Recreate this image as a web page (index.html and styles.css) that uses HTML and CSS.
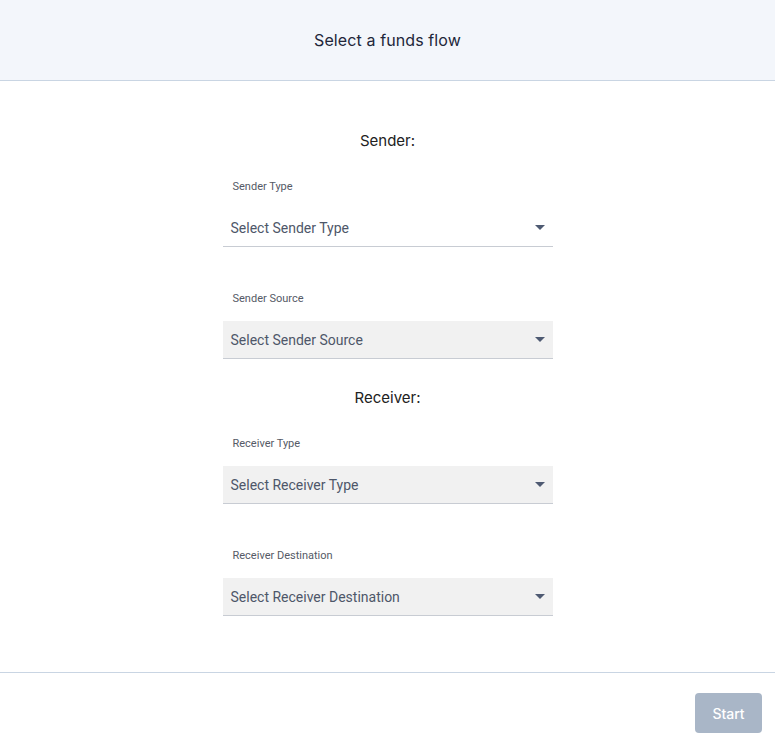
FILE: index.html
```html
<!DOCTYPE html>
<html>
<head>
<meta charset="utf-8">
<link rel="stylesheet" href="styles.css">
</head>
<body>
<header class="top">
  <h1 class="top-title">Select a funds flow</h1>
</header>
<main class="content">
  <section class="group">
    <h2 class="group-title">Sender:</h2>
    <div class="field">
      <label class="field-label">Sender Type</label>
      <div class="select select-plain"><span>Select Sender Type</span><svg class="caret" width="10" height="5" viewBox="0 0 10 5"><path d="M0 0h10L5 5z"/></svg></div>
    </div>
    <div class="field">
      <label class="field-label">Sender Source</label>
      <div class="select"><span>Select Sender Source</span><svg class="caret" width="10" height="5" viewBox="0 0 10 5"><path d="M0 0h10L5 5z"/></svg></div>
    </div>
  </section>
  <section class="group">
    <h2 class="group-title">Receiver:</h2>
    <div class="field">
      <label class="field-label">Receiver Type</label>
      <div class="select"><span>Select Receiver Type</span><svg class="caret" width="10" height="5" viewBox="0 0 10 5"><path d="M0 0h10L5 5z"/></svg></div>
    </div>
    <div class="field">
      <label class="field-label">Receiver Destination</label>
      <div class="select"><span>Select Receiver Destination</span><svg class="caret" width="10" height="5" viewBox="0 0 10 5"><path d="M0 0h10L5 5z"/></svg></div>
    </div>
  </section>
</main>
<footer class="bottom">
  <button class="start-btn">Start</button>
</footer>
</body>
</html>
```

FILE: styles.css
```css
* { box-sizing: border-box; }
html, body { margin: 0; padding: 0; background: #fff; }
body { font-family: "Inter", "Lato", sans-serif; color: #1f2233; }

.top {
  height: 81px;
  background: #f3f6fb;
  border-bottom: 1px solid #c9d5e3;
  display: flex;
  justify-content: center;
}
.top-title {
  margin: 30px 0 0;
  font-size: 16px;
  line-height: 20px;
  font-weight: 400;
  color: #22263a;
  letter-spacing: 0.1px;
}

.content {
  width: 330px;
  margin: 0 auto;
  padding-top: 48px;
  padding-bottom: 56px;
  display: flex;
  flex-direction: column;
  gap: 27px;
}
.group { display: flex; flex-direction: column; }
.group-title {
  margin: 0 0 27px;
  text-align: center;
  font-size: 15px;
  line-height: 24px;
  font-weight: 400;
  color: #222;
}
.field { display: flex; flex-direction: column; }
.field + .field { margin-top: 45px; }
.field-label {
  font-family: "Roboto", sans-serif;
  font-size: 11px;
  line-height: 14px;
  color: #555a66;
  padding-left: 10px;
  margin-bottom: 15px;
}
.select {
  height: 38px;
  background: #f1f1f1;
  border-bottom: 1px solid #c8ccd3;
  display: flex;
  align-items: center;
  justify-content: space-between;
  padding: 0 8px 0 8px;
  font-family: "Roboto", sans-serif;
  font-size: 14px;
  color: #4e5769;
}
.select-plain { background: #fff; }
.caret { fill: #4e5a72; margin-right: 0; }

.bottom {
  border-top: 1px solid #c9d5e3;
  display: flex;
  justify-content: flex-end;
  padding: 20px 13px 12px;
}
.start-btn {
  width: 67px;
  height: 40px;
  border: 0;
  border-radius: 4px;
  background: #a9b6c7;
  color: #fff;
  font-family: "Inter", "Lato", sans-serif;
  font-size: 14px;
  font-weight: 500;
}
```
